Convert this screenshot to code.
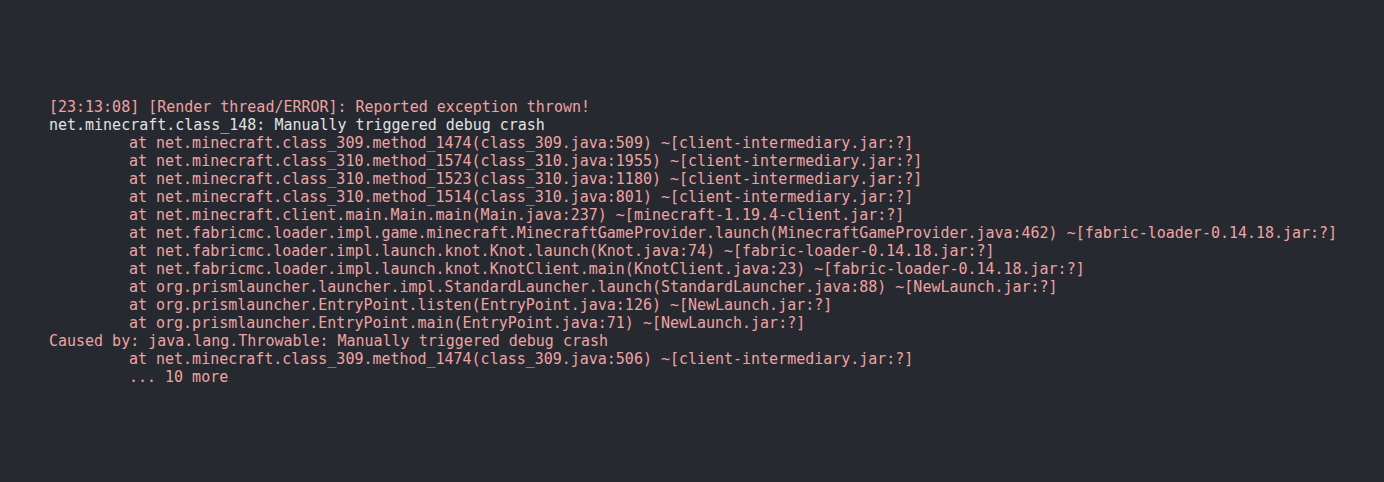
import React from "react";

const lines: { t: string; indent?: boolean; white?: boolean }[] = [
  { t: "[23:13:08] [Render thread/ERROR]: Reported exception thrown!" },
  { t: "net.minecraft.class_148: Manually triggered debug crash", white: true },
  { t: "at net.minecraft.class_309.method_1474(class_309.java:509) ~[client-intermediary.jar:?]", indent: true },
  { t: "at net.minecraft.class_310.method_1574(class_310.java:1955) ~[client-intermediary.jar:?]", indent: true },
  { t: "at net.minecraft.class_310.method_1523(class_310.java:1180) ~[client-intermediary.jar:?]", indent: true },
  { t: "at net.minecraft.class_310.method_1514(class_310.java:801) ~[client-intermediary.jar:?]", indent: true },
  { t: "at net.minecraft.client.main.Main.main(Main.java:237) ~[minecraft-1.19.4-client.jar:?]", indent: true },
  { t: "at net.fabricmc.loader.impl.game.minecraft.MinecraftGameProvider.launch(MinecraftGameProvider.java:462) ~[fabric-loader-0.14.18.jar:?]", indent: true },
  { t: "at net.fabricmc.loader.impl.launch.knot.Knot.launch(Knot.java:74) ~[fabric-loader-0.14.18.jar:?]", indent: true },
  { t: "at net.fabricmc.loader.impl.launch.knot.KnotClient.main(KnotClient.java:23) ~[fabric-loader-0.14.18.jar:?]", indent: true },
  { t: "at org.prismlauncher.launcher.impl.StandardLauncher.launch(StandardLauncher.java:88) ~[NewLaunch.jar:?]", indent: true },
  { t: "at org.prismlauncher.EntryPoint.listen(EntryPoint.java:126) ~[NewLaunch.jar:?]", indent: true },
  { t: "at org.prismlauncher.EntryPoint.main(EntryPoint.java:71) ~[NewLaunch.jar:?]", indent: true },
  { t: "Caused by: java.lang.Throwable: Manually triggered debug crash" },
  { t: "at net.minecraft.class_309.method_1474(class_309.java:506) ~[client-intermediary.jar:?]", indent: true },
  { t: "... 10 more", indent: true },
];

export default function App() {
  return (
    <div
      className="w-[1384px] h-[482px] bg-[#272930] pt-[98px] pl-[49px] overflow-hidden"
      style={{ fontFamily: '"DejaVu Sans Mono", monospace' }}
    >
      {lines.map((l, i) => (
        <div
          key={i}
          className={`text-[15px] leading-[18px] tracking-[-0.015px] whitespace-pre ${l.indent ? "pl-[80px]" : ""} ${
            l.white ? "text-[#e2e2e2]" : "text-[#eea3a3]"
          }`}
        >
          {l.t}
        </div>
      ))}
    </div>
  );
}
